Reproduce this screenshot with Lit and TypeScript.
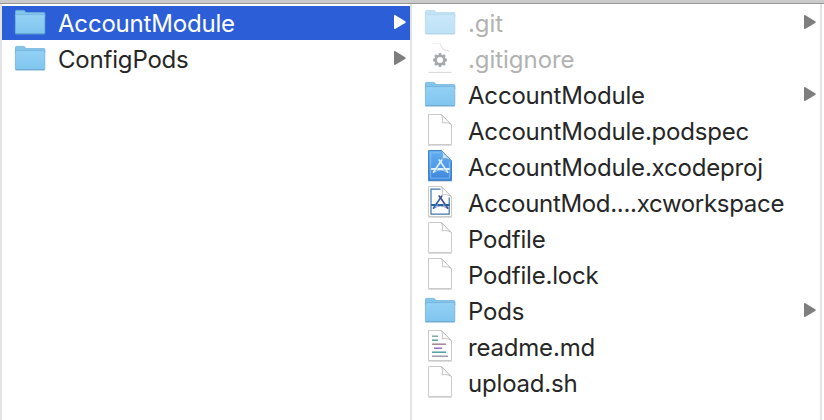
import { LitElement, html, css, svg, nothing } from "lit";
import { customElement, property } from "lit/decorators.js";

type Kind = "folder" | "file" | "config" | "project" | "workspace" | "markdown";
interface Entry {
  name: string;
  kind: Kind;
  hidden?: boolean;
  selected?: boolean;
  truncated?: boolean;
}

const parents: Entry[] = [
  { name: "AccountModule", kind: "folder", selected: true },
  { name: "ConfigPods", kind: "folder" },
];

const children: Entry[] = [
  { name: ".git", kind: "folder", hidden: true },
  { name: ".gitignore", kind: "config", hidden: true },
  { name: "AccountModule", kind: "folder" },
  { name: "AccountModule.podspec", kind: "file" },
  { name: "AccountModule.xcodeproj", kind: "project" },
  { name: "AccountMod....xcworkspace", kind: "workspace", truncated: true },
  { name: "Podfile", kind: "file" },
  { name: "Podfile.lock", kind: "file" },
  { name: "Pods", kind: "folder" },
  { name: "readme.md", kind: "markdown" },
  { name: "upload.sh", kind: "file" },
];

const PAGE = "M4.5 1.5H17.5L27.5 11.5V31.5H4.5Z";

const page = svg`
  <path d="M4 32.4H28" stroke="#dadada" stroke-width="1" />
  <path d=${PAGE} fill="#fff" stroke="#cacaca" />
  <path d="M17.3 1.7C18.8 4 18.6 7 18.2 9.8C21 9.3 24.5 9.6 27.3 11.4Z" fill="#fbfbfb" stroke="#bdbdbd" stroke-width=".9" />`;

const appMark = (color: string, accent: string) => svg`
  <g fill="none" stroke=${color} stroke-width="1.6" stroke-linecap="round">
    <path d="M17.8 11L9.4 23.2" />
    <path d="M15.2 11L23.8 23.2" stroke=${accent} />
    <path d="M7.8 20H12M14 20H19M21 20H25" stroke-width="1.8" />
    <path d="M10.5 23Q16.5 18.6 22.8 23" stroke-width=".9" opacity=".7" />
  </g>`;

const TEETH = [0, 45, 90, 135, 180, 225, 270, 315];

const glyphs: Record<Kind, unknown> = {
  folder: svg`
    <path d="M1.5 8V6.3Q1.5 5.4 2.4 5.4H9.6Q10.5 5.4 11 6.2L11.9 7.6H30Q30.8 7.6 30.8 8.4V12H1.5Z" fill="#84c5ec" stroke="#6fb1da" stroke-width=".8" />
    <path d="M1.4 9.6H30.8V27.9Q30.8 28.8 29.9 28.8H2.3Q1.4 28.8 1.4 27.9Z" fill="url(#sky)" stroke="#74b3da" stroke-width=".8" />
    <path d="M1.5 28.8H30.7" stroke="#629fc8" stroke-width=".9" />`,
  file: page,
  config: svg`
    <path d="M8 2.5H15" fill="none" stroke="#f0f0f0" />
    <path d="M16 2.5L19 8.5M19.5 8.6L25.5 10.4" fill="none" stroke="#dedede" />
    <path d="M4.5 31.4H27.5" stroke="#d6d7d9" />
    <circle cx="16" cy="19" r="4.3" fill="none" stroke="#a5a9ac" stroke-width="2.5" />
    ${TEETH.map((a) => svg`<rect x="14.6" y="12" width="2.8" height="3" rx=".7" fill="#a5a9ac" transform="rotate(${a} 16 19)" />`)}`,
  project: svg`
    <path d="M4 32.4H28" stroke="#d4dbe4" />
    <path d=${PAGE} fill="url(#blueprint)" stroke="#4483c6" />
    <path d="M16.5 3.8H6.7V29.2H25.4V12.5" fill="none" stroke="#8fc5f6" stroke-width=".7" />
    <path d="M17.3 1.7C18.8 4 18.6 7 18.2 9.8C21 9.3 24.5 9.6 27.3 11.4Z" fill="#c4e2fa" stroke="#6ba3d6" stroke-width=".8" />
    ${appMark("#e0f0ff", "#e0f0ff")}`,
  workspace: svg`
    ${page}
    <path d="M16.5 4.2H7V29.2H25.2V12.5" fill="none" stroke="#3c75ab" stroke-width="1.2" />
    ${appMark("#2b62a6", "#49459b")}`,
  markdown: svg`
    ${page}
    <g fill="none" stroke-width="1.5">
      <path d="M8 7.2H14" stroke="#7fa9ac" />
      <path d="M8 11.2H14" stroke="#5b9fa5" />
      <path d="M8 15.2H22" stroke="#a98290" />
      <path d="M10 19.2H18" stroke="#9a6fc4" />
      <path d="M8 23.2H22" stroke="#539da0" />
      <path d="M8 27.2H24" stroke="#a09aaa" />
    </g>`,
};

@customElement("finder-row")
class FinderRow extends LitElement {
  @property({ attribute: false }) entry!: Entry;

  static styles = css`
    :host { display: block; }
    .row {
      box-sizing: border-box;
      height: 36px;
      display: flex;
      align-items: center;
      padding: 0 4px 0 12px;
      border-top: 1px solid transparent;
      border-bottom: 1px solid transparent;
      background-clip: padding-box;
      color: #262626;
    }
    .selected { background-color: #2c5fd7; color: #fff; }
    .icon { flex: none; width: 32px; height: 36px; overflow: visible; }
    .name {
      flex: 1;
      margin-left: 12px;
      padding-top: 2px;
      white-space: nowrap;
      font: 400 24px/36px Inter, "Liberation Sans", sans-serif;
      letter-spacing: -0.19px;
    }
    .truncated .name { letter-spacing: -0.31px; }
    .hidden .name { color: #b2b2b2; letter-spacing: -0.05px; }
    .hidden .faded { opacity: 0.5; }
    .arrow { flex: none; width: 12px; height: 36px; fill: #7e7e7e; }
    .selected .arrow { fill: #fff; }
  `;

  render() {
    const { name, kind, hidden, selected, truncated } = this.entry;
    return html`
      <div class="row ${hidden ? "hidden" : ""} ${selected ? "selected" : ""} ${truncated ? "truncated" : ""}">
        <svg class="icon ${kind === "folder" ? "faded" : ""}" viewBox="0 0 32 36">
          <defs>
            <linearGradient id="sky" x1="0" y1="0" x2="0" y2="1">
              <stop offset="0" stop-color="#94d1f5" />
              <stop offset="1" stop-color="#7fc5ef" />
            </linearGradient>
            <linearGradient id="blueprint" x1="0" y1="0" x2="0" y2="1">
              <stop offset="0" stop-color="#62b0f2" />
              <stop offset="1" stop-color="#3f86dc" />
            </linearGradient>
          </defs>
          ${glyphs[kind]}
        </svg>
        <span class="name">${name}</span>
        ${kind === "folder"
          ? html`<svg class="arrow" viewBox="0 0 12 36"><path d="M0 10.2L1 10L11.6 16.4V17.8L1 24L0 23.8Z" /></svg>`
          : nothing}
      </div>`;
  }
}

@customElement("app-root")
class AppRoot extends LitElement {
  static styles = css`
    :host { display: block; }
    .window {
      box-sizing: border-box;
      width: 824px;
      height: 420px;
      display: flex;
      flex-direction: column;
      overflow: hidden;
      background: #fff;
    }
    .edge { flex: none; height: 3px; background: #cbcbcb; border-bottom: 1px solid #979797; }
    .columns { flex: 1; display: grid; grid-template-columns: 410px 410px; border-left: 2px solid #e3e3e5; }
    .column { box-sizing: border-box; padding-top: 1px; border-right: 2px solid #e3e3e3; }
  `;

  render() {
    const column = (entries: Entry[]) => html`
      <div class="column">
        ${entries.map((entry) => html`<finder-row .entry=${entry}></finder-row>`)}
      </div>`;
    return html`
      <div class="window">
        <div class="edge"></div>
        <div class="columns">${column(parents)}${column(children)}</div>
      </div>`;
  }
}
